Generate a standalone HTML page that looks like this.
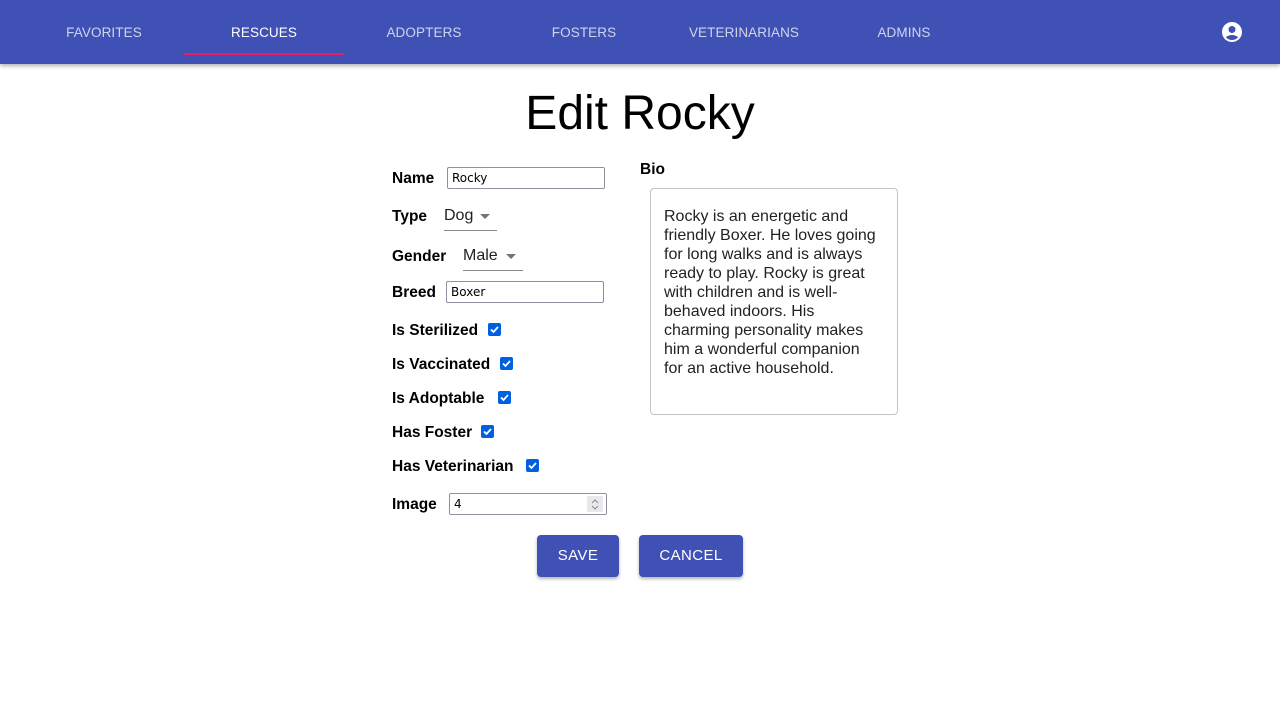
<!DOCTYPE html>
<html><head><meta charset="utf-8"><style>
*{box-sizing:border-box;margin:0;padding:0}
body{width:1280px;height:720px;background:#fff;font-family:"Liberation Sans",sans-serif;position:relative;overflow:hidden}
.nav{position:absolute;left:0;top:0;width:1280px;height:64px;background:#3f51b5;box-shadow:0 2px 4px rgba(0,0,0,.3)}
.tab{position:absolute;top:1px;height:64px;width:160px;line-height:64px;text-align:center;color:rgba(255,255,255,.75);font-size:13.5px;letter-spacing:.1px}
.tab.a{color:#fff}
.ind{position:absolute;left:184px;top:53px;width:160px;height:2px;background:#e91e63}
h1{position:absolute;left:0;width:1280px;top:86px;text-align:center;font-weight:400;font-size:48px;color:#000}
.l{position:absolute;left:392px;font-family:"Liberation Sans",sans-serif;font-weight:bold;font-size:15.5px;color:#000;margin-top:2px}
.in{position:absolute;height:22px;border:1px solid #8f8f9d;border-radius:2px;font-family:"DejaVu Sans",sans-serif;font-size:12px;padding:4px 4px;line-height:13px}
.sel{position:absolute;border-bottom:1px solid #8a8a8a;font-size:16px;color:#222;height:28px}
.sel span{position:absolute;top:4px}
.car{position:absolute;top:11px;width:0;height:0;border-left:5px solid transparent;border-right:5px solid transparent;border-top:5px solid #757575}
.cb{position:absolute;width:13px;height:13px;background:#0060df;border-radius:2px}
.cb svg{position:absolute;left:0;top:0}
.bio{position:absolute;left:650px;top:188px;width:248px;height:227px;border:1px solid #c4c4c4;border-radius:4px;padding:18px 17px 17px 13px;font-size:16px;line-height:19px;color:#222}
.btn{position:absolute;top:535px;height:42px;background:#3f51b5;color:#fff;border-radius:4px;font-size:15px;line-height:42px;text-align:center;letter-spacing:.4px;box-shadow:0 2px 3px rgba(0,0,0,.3)}
</style></head><body>
<div class="nav">
<div class="tab" style="left:24px">FAVORITES</div>
<div class="tab a" style="left:184px">RESCUES</div>
<div class="tab" style="left:344px">ADOPTERS</div>
<div class="tab" style="left:504px">FOSTERS</div>
<div class="tab" style="left:664px">VETERINARIANS</div>
<div class="tab" style="left:824px">ADMINS</div>
<div class="ind"></div>
<svg style="position:absolute;left:1220px;top:20px" width="24" height="24" viewBox="0 0 24 24"><path fill="#fff" d="M12 2C6.48 2 2 6.48 2 12s4.48 10 10 10 10-4.48 10-10S17.52 2 12 2zm0 4c1.93 0 3.5 1.57 3.5 3.5S13.93 13 12 13s-3.5-1.57-3.5-3.5S10.07 6 12 6zm0 14c-2.03 0-4.43-.82-6.14-2.88C7.55 15.8 9.68 15 12 15s4.45.8 6.14 2.12C16.43 19.18 14.03 20 12 20z"/></svg>
</div>
<h1>Edit Rocky</h1>
<div class="l" style="top:168px">Name</div>
<div class="in" style="left:447px;top:167px;width:158px">Rocky</div>
<div class="l" style="top:206px">Type</div>
<div class="sel" style="left:444px;top:203px;width:53px"><span>Dog</span><div class="car" style="left:36px"></div></div>
<div class="l" style="top:246px">Gender</div>
<div class="sel" style="left:463px;top:243px;width:60px"><span>Male</span><div class="car" style="left:43px"></div></div>
<div class="l" style="top:282px">Breed</div>
<div class="in" style="left:446px;top:281px;width:158px">Boxer</div>
<div class="l" style="top:320px">Is Sterilized</div>
<div class="cb" style="left:488px;top:323px"><svg width="13" height="13"><path d="M3 6.5l2.5 2.5 4.5-5" stroke="#fff" stroke-width="1.8" fill="none"/></svg></div>
<div class="l" style="top:354px">Is Vaccinated</div>
<div class="cb" style="left:500px;top:357px"><svg width="13" height="13"><path d="M3 6.5l2.5 2.5 4.5-5" stroke="#fff" stroke-width="1.8" fill="none"/></svg></div>
<div class="l" style="top:388px">Is Adoptable</div>
<div class="cb" style="left:498px;top:391px"><svg width="13" height="13"><path d="M3 6.5l2.5 2.5 4.5-5" stroke="#fff" stroke-width="1.8" fill="none"/></svg></div>
<div class="l" style="top:422px">Has Foster</div>
<div class="cb" style="left:481px;top:425px"><svg width="13" height="13"><path d="M3 6.5l2.5 2.5 4.5-5" stroke="#fff" stroke-width="1.8" fill="none"/></svg></div>
<div class="l" style="top:456px">Has Veterinarian</div>
<div class="cb" style="left:526px;top:459px"><svg width="13" height="13"><path d="M3 6.5l2.5 2.5 4.5-5" stroke="#fff" stroke-width="1.8" fill="none"/></svg></div>
<div class="l" style="top:494px">Image</div>
<div class="in" style="left:449px;top:493px;width:158px">4<div style="position:absolute;right:3px;top:2px;width:16px;height:16px;background:#e9e9ed"><svg width="16" height="16"><path d="M5 7l3-3 3 3M5 10l3 3 3-3" stroke="#888" fill="none"/></svg></div></div>
<div class="l" style="left:640px;top:159px">Bio</div>
<div class="bio">Rocky is an energetic and friendly Boxer. He loves going for long walks and is always ready to play. Rocky is great with children and is well-behaved indoors. His charming personality makes him a wonderful companion for an active household.</div>
<div class="btn" style="left:537px;width:82px">SAVE</div>
<div class="btn" style="left:639px;width:104px">CANCEL</div>
</body></html>
